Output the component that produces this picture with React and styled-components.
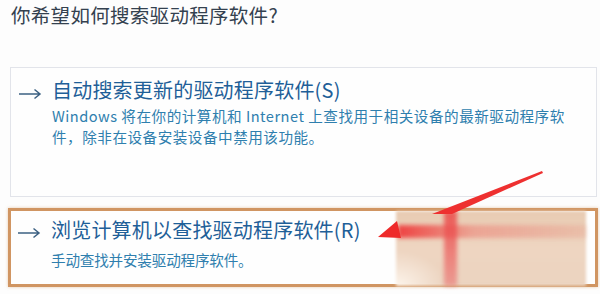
import styled, { createGlobalStyle } from "styled-components";

const Global = createGlobalStyle`
  html, body {
    margin: 0;
    padding: 0;
    background: #fdfdfd;
  }
  body {
    font-family: "Noto Sans CJK SC", "Noto Sans", sans-serif;
  }
`;

const Page = styled.div`
  position: relative;
  width: 600px;
  height: 294px;
  overflow: hidden;
  background: #fdfdfd;
  box-sizing: border-box;
  padding: 4px 2px 0 8px;
`;

const Heading = styled.h1`
  margin: 0 0 41px 3px;
  font-size: 19.5px;
  line-height: 22px;
  font-weight: 400;
  color: #34414f;
  letter-spacing: 0.3px;
`;

const OptionList = styled.div`
  display: flex;
  flex-direction: column;
  gap: 11px;
`;

const Option = styled.div`
  box-sizing: border-box;
  display: flex;
  align-items: flex-start;
  gap: 10px;
  margin: ${(p) => (p.$highlighted ? "0" : "0 1px 0 2px")};
  height: ${(p) => (p.$highlighted ? "79px" : "130px")};
  padding: ${(p) => (p.$highlighted ? "7px 8px 0 6px" : "12px 8px 0 7px")};
  border: ${(p) => (p.$highlighted ? "3px solid #d09562" : "1px solid #e2e4ea")};
  box-shadow: ${(p) =>
    p.$highlighted ? "0 0 3px rgba(214, 160, 110, 0.55)" : "none"};
  background: #fefefe;
`;

const ArrowIcon = styled.svg`
  flex: none;
  width: 24px;
  height: 12px;
  margin-top: ${(p) => (p.$highlighted ? "9px" : "8px")};
  color: #3d6183;
`;

const OptionBody = styled.div`
  display: flex;
  flex-direction: column;
`;

const OptionTitle = styled.div`
  font-size: 20px;
  line-height: ${(p) => (p.$highlighted ? "24px" : "20px")};
  color: #1f5f98;
  letter-spacing: 0.2px;
`;

const OptionDesc = styled.div`
  margin-top: ${(p) => (p.$highlighted ? "8px" : "5px")};
  font-size: 14.6px;
  line-height: ${(p) => (p.$highlighted ? "20px" : "21px")};
  color: #2f7fae;
  letter-spacing: ${(p) => (p.$highlighted ? "-0.2px" : "0.5px")};
`;

const BlurPatch = styled.div`
  position: absolute;
  left: 396px;
  top: 211px;
  width: 190px;
  height: 75px;
  background:
    radial-gradient(ellipse 50px 35px at 0% 100%, rgba(255, 248, 240, 0.9), rgba(255, 248, 240, 0)),
    linear-gradient(180deg, #e8cbb2 0%, #eed5c1 50%, #ebd3bf 100%);
  filter: blur(1.5px);
`;

const Streak = styled.div`
  position: absolute;
  left: ${(p) => p.$x}px;
  top: ${(p) => p.$y}px;
  width: ${(p) => p.$w}px;
  height: ${(p) => p.$h}px;
  background: ${(p) => p.$bg};
  filter: blur(2px);
`;

const Pointer = styled.svg`
  position: absolute;
  left: 0;
  top: 0;
  width: 600px;
  height: 294px;
  pointer-events: none;
`;

function Arrow({ highlighted }) {
  return (
    <ArrowIcon $highlighted={highlighted} viewBox="0 0 24 12">
      <path
        d="M1 6 H22 M16.5 1.5 L22 6 L16.5 10.5"
        fill="none"
        stroke="currentColor"
        strokeWidth="1.5"
      />
    </ArrowIcon>
  );
}

export default function App() {
  return (
    <>
      <Global />
      <Page>
        <Heading>你希望如何搜索驱动程序软件?</Heading>
        <OptionList>
          <Option>
            <Arrow />
            <OptionBody>
              <OptionTitle>自动搜索更新的驱动程序软件(S)</OptionTitle>
              <OptionDesc>
                Windows 将在你的计算机和 Internet 上查找用于相关设备的最新驱动程序软
                <br />
                件，除非在设备安装设备中禁用该功能。
              </OptionDesc>
            </OptionBody>
          </Option>
          <Option $highlighted>
            <Arrow highlighted />
            <OptionBody>
              <OptionTitle $highlighted>浏览计算机以查找驱动程序软件(R)</OptionTitle>
              <OptionDesc $highlighted>手动查找并安装驱动程序软件。</OptionDesc>
            </OptionBody>
          </Option>
        </OptionList>

        <BlurPatch />
        <Streak
          $x={398}
          $y={225}
          $w={188}
          $h={13}
          $bg="linear-gradient(90deg, rgba(238,60,60,0.95), rgba(236,120,110,0.5) 40%, rgba(230,150,130,0.3))"
        />
        <Streak
          $x={444}
          $y={211}
          $w={13}
          $h={75}
          $bg="linear-gradient(180deg, rgba(235,70,70,0.85), rgba(235,110,110,0.55))"
        />
        <Pointer viewBox="0 0 600 294">
          <polygon points="542,171 543,173 452,214 432,214" fill="#ee3030" />
          <polygon points="378,237 397,221 401,238" fill="#ee2a2a" />
        </Pointer>
      </Page>
    </>
  );
}
